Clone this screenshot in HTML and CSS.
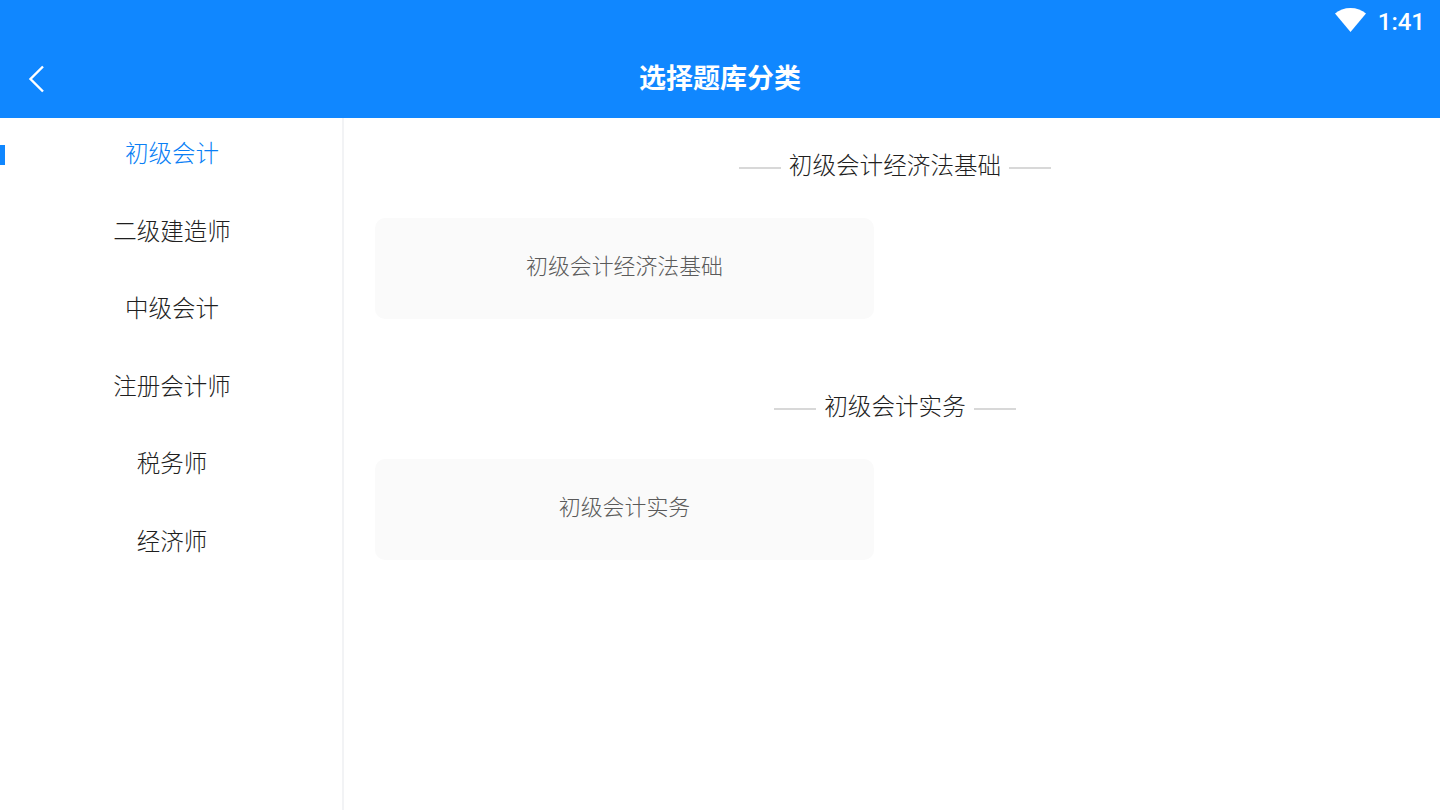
FILE: index.html
```html
<!DOCTYPE html>
<html lang="zh-CN">
<head>
	<meta charset="UTF-8">
	<title>选择题库分类</title>
	<link rel="stylesheet" href="styles.css">
</head>
<body>
	<div class="header">
		<div class="status">
			<svg class="wifi" width="31" height="24" viewBox="0 0 31 24">
				<path d="M0 5.500C4 2 9.500 0 15.500 0S27 2 31 5.500L15.500 24z" fill="#fff"/>
			</svg>
			<span class="time">1:41</span>
		</div>
		<div class="titlebar">
			<svg class="back" width="18" height="28" viewBox="0 0 18 28">
				<path d="M15 1.500L2.500 14 15 26.500" fill="none" stroke="#fff" stroke-width="2.400"/>
			</svg>
			<h1 class="title">选择题库分类</h1>
		</div>
	</div>
	<div class="page">
		<div class="side">
			<div class="side-item active">初级会计</div>
			<div class="side-item">二级建造师</div>
			<div class="side-item">中级会计</div>
			<div class="side-item">注册会计师</div>
			<div class="side-item">税务师</div>
			<div class="side-item">经济师</div>
		</div>
		<div class="main">
			<div class="section">
				<div class="section-title"><span>初级会计经济法基础</span></div>
				<div class="card">初级会计经济法基础</div>
			</div>
			<div class="section">
				<div class="section-title"><span>初级会计实务</span></div>
				<div class="card">初级会计实务</div>
			</div>
		</div>
	</div>
</body>
</html>
```

FILE: styles.css
```css
* {
	box-sizing: border-box;
}

html, body {
	height: 100%;
}

body {
	margin: 0;
	display: flex;
	flex-direction: column;
	height: 810px;
	overflow: hidden;
	background-color: #fff;
	font-family: Roboto, "Noto Sans CJK SC", sans-serif;
	color: #1f1f1f;
}

.header {
	height: 118px;
	background-color: #1087ff;
	color: #fff;
}

.status {
	height: 40px;
	padding-right: 15px;
	display: flex;
	align-items: center;
	justify-content: flex-end;
}

.wifi {
	margin-right: 12px;
}

.time {
	margin-top: 4px;
	font-size: 24px;
	font-weight: 500;
}

.titlebar {
	height: 78px;
	padding-left: 28px;
	position: relative;
	display: flex;
	align-items: center;
}

.back {
	margin-bottom: 1px;
}

.title {
	margin: 0 0 5px;
	position: absolute;
	left: 0;
	right: 0;
	text-align: center;
	font-size: 27px;
	font-weight: 700;
}

.page {
	flex: 1;
	display: flex;
}

.side {
	width: 344px;
	border-right: 2px solid #f2f3f5;
}

.side-item {
	height: 77.5px;
	padding: 0 0 9px 2px;
	display: flex;
	align-items: center;
	justify-content: center;
	font-size: 23.5px;
	font-weight: 300;
	position: relative;
}

.side-item.active {
	color: #0a7ff5;
}

.side-item.active::before {
	content: "";
	position: absolute;
	left: 0;
	top: 27px;
	width: 5px;
	height: 20px;
	background-color: #1087ff;
}

.main {
	flex: 1;
	padding: 30px 25px 0 31px;
}

.section {
	height: 241px;
}

.section-title {
	height: 36px;
	margin-bottom: 34px;
	display: flex;
	align-items: center;
	justify-content: center;
	font-size: 23.600px;
	font-weight: 300;
}

.section-title span {
	padding: 0 8px;
	margin-bottom: 4px;
}

.section-title::before,
.section-title::after {
	content: "";
	width: 42px;
	height: 2px;
	margin-top: 4px;
	background-color: #d8d8d8;
}

.card {
	width: 499px;
	height: 101px;
	padding-bottom: 9px;
	display: flex;
	align-items: center;
	justify-content: center;
	border-radius: 10px;
	background-color: #fafafa;
	font-size: 21.900px;
	font-weight: 300;
	color: #5a5a5a;
}
```
